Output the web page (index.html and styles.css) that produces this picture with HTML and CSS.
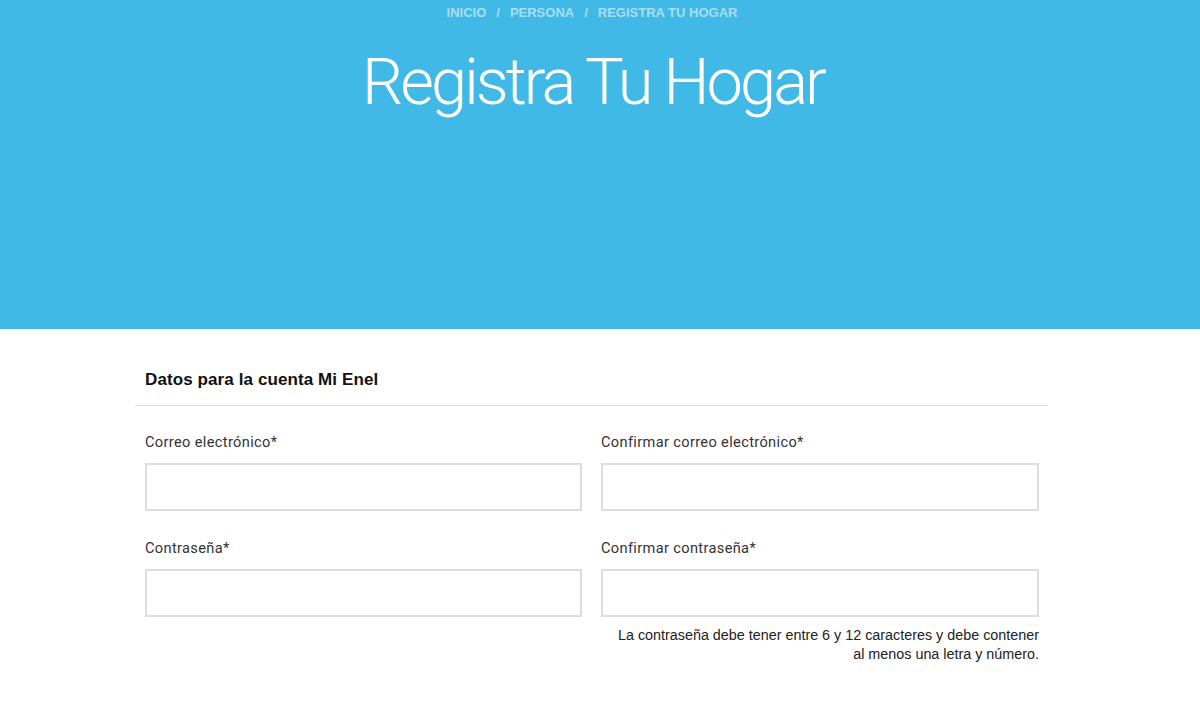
FILE: index.html
```html
<!DOCTYPE html>
<html lang="es">
<head>
<meta charset="utf-8">
<title>Registra Tu Hogar</title>
<link rel="stylesheet" href="styles.css">
</head>
<body>
  <header class="hero">
    <nav class="crumbs">
      <a href="#">INICIO</a><span class="sep">/</span><a href="#">PERSONA</a><span class="sep">/</span><span>REGISTRA TU HOGAR</span>
    </nav>
    <h1 class="hero-title">Registra Tu Hogar</h1>
  </header>

  <main class="form-wrap">
    <h2 class="section-title">Datos para la cuenta Mi Enel</h2>
    <div class="grid">
      <div class="field">
        <label for="email">Correo electrónico*</label>
        <input id="email" type="email">
      </div>
      <div class="field">
        <label for="email2">Confirmar correo electrónico*</label>
        <input id="email2" type="email">
      </div>
      <div class="field">
        <label for="pass">Contraseña*</label>
        <input id="pass" type="password">
      </div>
      <div class="field">
        <label for="pass2">Confirmar contraseña*</label>
        <input id="pass2" type="password">
        <p class="hint">La contraseña debe tener entre 6 y 12 caracteres y debe contener<br>al menos una letra y número.</p>
      </div>
    </div>
  </main>
</body>
</html>
```

FILE: styles.css
```css
html, body {
  margin: 0;
  padding: 0;
  background: #ffffff;
}

body {
  font-family: "Liberation Sans", Arial, sans-serif;
  color: #222;
}

.hero {
  background: #41b9e6;
  height: 329px;
  display: flex;
  flex-direction: column;
  align-items: center;
  padding-top: 5px;
  box-sizing: border-box;
}

.crumbs {
  font-family: "Liberation Sans", Arial, sans-serif;
  font-size: 13px;
  font-weight: bold;
  color: #a9def3;
  line-height: 16px;
  margin-left: -16px;
}

.crumbs a {
  color: inherit;
  text-decoration: none;
}

.crumbs .sep {
  margin: 0 10px;
}

.hero-title {
  margin: 23px 0 0 -14px;
  font-family: Roboto, "Liberation Sans", sans-serif;
  font-weight: 300;
  font-size: 65px;
  line-height: 76px;
  letter-spacing: -2.95px;
  color: #ffffff;
}

.form-wrap {
  width: 913px;
  padding-left: 135px;
  margin: 0;
}

.section-title {
  margin: 39px 0 0;
  padding: 0 10px 13px;
  font-size: 17px;
  font-weight: bold;
  color: #111;
  line-height: 24px;
  letter-spacing: 0.1px;
  border-bottom: 1px solid #dedede;
}

.grid {
  display: grid;
  grid-template-columns: 437px 438px;
  column-gap: 19px;
  row-gap: 27px;
  padding: 26px 0 0 10px;
}

.field {
  display: flex;
  flex-direction: column;
}

.field label {
  font-family: Roboto, "Liberation Sans", sans-serif;
  font-size: 14.6px;
  line-height: 20px;
  color: #333;
  letter-spacing: 0.35px;
  margin-bottom: 11px;
}

.field input {
  height: 48px;
  box-sizing: border-box;
  border: 2px solid #dcdcdc;
  background: #fff;
  margin: 0;
  padding: 0 12px;
  font-size: 14px;
  outline: none;
}

.hint {
  margin: 9px 0 0;
  text-align: right;
  font-size: 14.35px;
  line-height: 19px;
  color: #222;
  white-space: nowrap;
}
```
